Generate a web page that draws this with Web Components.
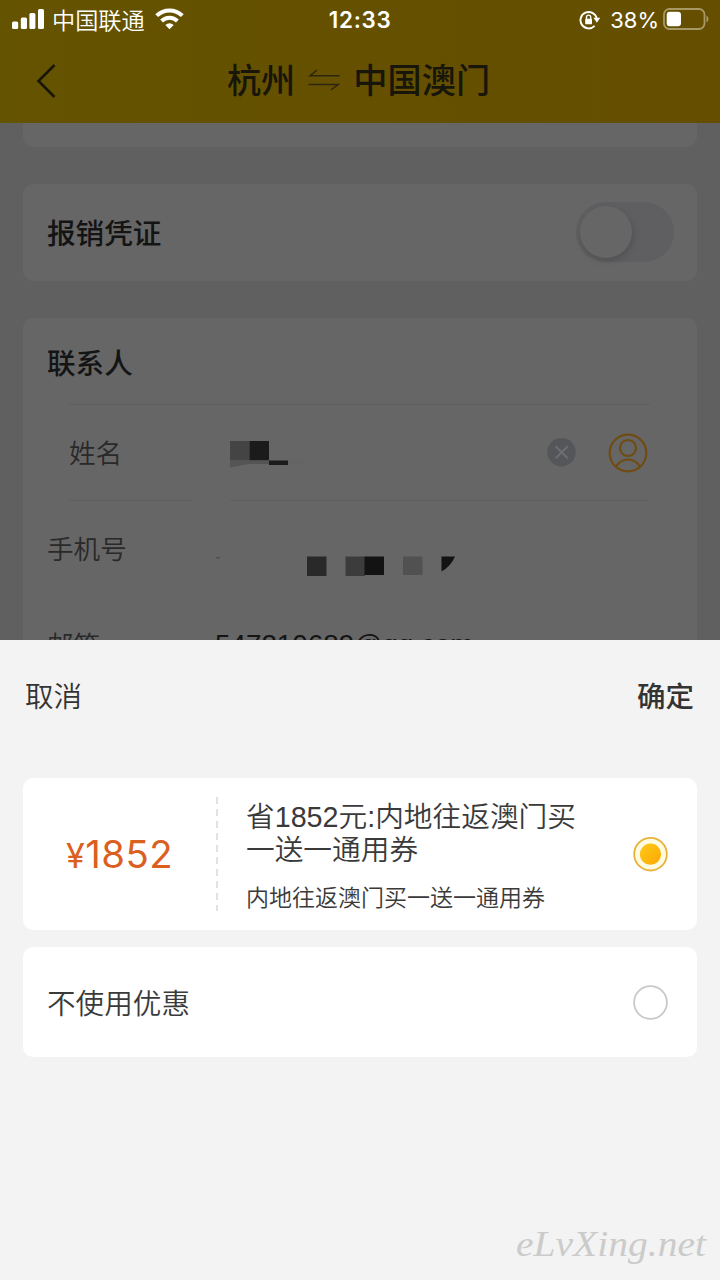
<!DOCTYPE html>
<html lang="zh-CN">
<head>
<meta charset="utf-8">
<title>优惠选择</title>
<style>
html,body{margin:0;height:100%;overflow:hidden}
body{width:720px;height:1280px;font-family:"Liberation Sans","Noto Sans CJK SC",sans-serif;background:#606060}
</style>
</head>
<body>
<booking-app></booking-app>
<script>
const define=(name,html)=>{
  const t=document.createElement('template');t.innerHTML=html;
  customElements.define(name,class extends HTMLElement{
    constructor(){super();this.attachShadow({mode:'open'}).append(t.content.cloneNode(true));}
  });
};

define('status-bar',`<style>
:host{display:flex;align-items:center;height:40px;color:#fff;box-sizing:border-box;padding:0 11px 0 12px}
svg{display:block;flex:none}
.bars,.wifi{margin-bottom:2px}
.carrier{font:350 23.2px/38px "Noto Sans CJK SC",sans-serif;margin:0 10px 0 8px;white-space:nowrap;height:40px}
.time{font:600 22.4px/40px Inter,sans-serif;letter-spacing:.75px;margin-left:145px;white-space:nowrap}
.right{margin-left:auto;display:flex;align-items:center}
.pct{font:400 22px/40px Inter,sans-serif;margin:0 4px 0 9px}
</style>
<svg class="bars" width="32" height="22" viewBox="0 0 32 22" fill="#fff"><rect y="13.500" width="6.200" height="7.500" rx="1.500"/><rect x="8.800" y="9.500" width="6.200" height="11.500" rx="1.500"/><rect x="17.400" y="5" width="6" height="16" rx="1.500"/><rect x="26" y="1" width="6" height="20" rx="1.500"/></svg>
<span class="carrier">中国联通</span>
<svg class="wifi" width="29" height="22" viewBox="0 0 29 22" fill="none" stroke="#fff" stroke-width="4"><path d="M1.700 7.700a18.200 18.200 0 0 1 25.600 0"/><path d="M6.600 13a11.300 11.300 0 0 1 15.800 0"/><path d="M14.500 21.200l-4.200-4.300q4.200-3.200 8.400 0z" fill="#fff" stroke="none"/></svg>
<span class="time">12:33</span>
<div class="right">
<svg width="22" height="20" viewBox="0 0 22 20" fill="none" stroke="#fff" stroke-width="1.900"><path d="M17.700 8.500A8.200 8.200 0 1 0 15.600 15.900"/><path d="M14.400 7.800h6.800l-3.300 5z" fill="#fff" stroke="none"/><rect x="6.200" y="8.800" width="6.800" height="5.500" rx=".6" fill="#fff" stroke="none"/><path d="M7.500 9V7.200a2.100 2.100 0 0 1 4.200 0V9" stroke-width="1.400"/></svg>
<span class="pct">38%</span>
<svg width="46" height="22" viewBox="0 0 46 22" style="margin-bottom:2px"><rect x="1" y="1" width="40.500" height="20" rx="5.500" fill="none" stroke="#a79966" stroke-width="1.800"/><rect x="3.700" y="3.700" width="14.300" height="14.600" rx="3" fill="#fff"/><path d="M43.500 7.500q2 1 2 3.500t-2 3.500z" fill="#a79966"/></svg>
</div>`);

define('title-bar',`<style>
:host{display:flex;align-items:center;height:83px;color:#18150b;padding:0 35px}
.title{flex:1;display:flex;justify-content:center;align-items:center;font:500 34.200px/77px "Noto Sans CJK SC",sans-serif;height:83px;margin-right:25px;white-space:nowrap}
.title svg{margin:0 13px 4px}
.title span{height:83px}
svg{display:block}
.back{margin-bottom:2px}
</style>
<svg class="back" width="22" height="36" viewBox="0 0 22 36" fill="none" stroke="#18150b" stroke-width="2.500"><path d="M19.500 2L3.500 18L19.500 34"/></svg>
<div class="title"><span><slot name="from"></slot></span><svg width="32" height="22" viewBox="0 0 32 22" fill="none" stroke="#2e260c" stroke-width="1.500"><path d="M31.500 6.800H2L9 1M.5 15.500H30L23 21"/></svg><span><slot name="to"></slot></span></div>`);

define('form-card',`<style>
:host{display:block;margin:0 23px;background:#666;border-radius:10px;box-sizing:border-box}
</style><slot></slot>`);

define('toggle-switch',`<style>
:host{display:block;width:98px;height:60px;border-radius:30px;background:#5f5f61;box-sizing:border-box;padding:4px 4px;margin-bottom:1px}
i{display:block;width:52px;height:52px;border-radius:50%;background:#666;box-shadow:1px 3px 7px rgba(0,0,0,.15)}
</style><i></i>`);

define('voucher-row',`<style>
:host{display:flex;align-items:center;justify-content:space-between;height:96px;padding:0 23px 0 24px;color:#141414;font:500 28.600px/95px "Noto Sans CJK SC",sans-serif}
.text{height:97px}
</style><span class="text"><slot></slot></span><toggle-switch></toggle-switch>`);

define('contact-form',`<style>
:host{display:block;font:350 26.600px/94px "Noto Sans CJK SC",sans-serif;color:#292929}
h2{margin:0;padding-left:24px;height:86px;font:500 28.600px/87px "Noto Sans CJK SC",sans-serif;color:#141414}
.row{display:flex;height:95px;line-height:94px;padding-left:24px;align-items:center}
.label{height:95px}
.name{margin:0 47px 0 46px;padding-left:0;border-top:1px solid #5f5f5f}
.rule{display:flex;gap:37px;height:1px;margin:0 49px 0 46px}
.rule i{height:1px;background:#5f5f5f;width:124px}.rule i+i{flex:1;width:auto}
.label{width:161px;flex:none}
.row.phone .label,.row.mail .label{width:168px}
.spacer{flex:1}.person{margin-left:32px;margin-right:2px}
svg{display:block}
.mail .label{line-height:96px}
.mail .value{font:400 27.800px/95px "Liberation Sans",sans-serif;color:#141414;white-space:nowrap;padding-top:1px}
</style>
<h2>联系人</h2>
<div class="row name"><span class="label">姓名</span>
<svg width="76" height="28" viewBox="0 0 76 28" style="margin-top:2px"><path fill="#444" d="M0 1h19.500v19.500H0z"/><path fill="#1b1b1b" d="M19.500 1H39v19.500H19.500zM39 20.500h19V25H39z"/><path fill="#555" d="M0 20.500h39V24H19L0 27.500z"/><path fill="#666" d="M20 24.500h19v2H20z"/><path fill="#646464" d="M58 20.500h18V24H58z"/></svg>
<span class="spacer"></span>
<svg width="29" height="29" viewBox="0 0 29 29"><circle cx="14.500" cy="14.300" r="14.200" fill="#55565a"/><path d="M8.700 8.300l12 12M20.700 8.300l-12 12" stroke="#6d6d6f" stroke-width="2"/></svg>
<svg class="person" width="40" height="40" viewBox="0 0 40 40" fill="none" stroke="#704c12" stroke-width="2.200"><circle cx="20" cy="20" r="18.300"/><circle cx="20" cy="15" r="8"/><path d="M8 33.600Q12.500 26.500 20 26.500T32 33.600"/></svg>
</div>
<div class="rule"><i></i><i></i></div>
<div class="row phone"><span class="label">手机号</span>
<svg width="242" height="40" viewBox="0 0 242 40" style="margin-top:24px"><path fill="#505050" d="M1 16h4v1.500H1z"/><path fill="#292929" d="M92 15.500h19.500V35H92z"/><path fill="#3c3c3c" d="M130.500 15.500H150V35h-19.500z"/><path fill="#131313" d="M149.500 15.500H169V34h-19.500z"/><path fill="#515151" d="M188 15.500h19.500V34H188z"/><path fill="#131313" d="M226.500 15.500h13.500q-4 9.500-13.500 15z"/></svg></div>
<div class="row mail"><span class="label">邮箱</span><span class="value">547210689@qq.com</span></div>`);

define('coupon-radio',`<style>
:host{display:block;width:35px;height:35px;flex:none}
.on{display:none}:host([checked]) .on{display:block}:host([checked]) .off{display:none}svg{display:block}
</style>
<svg class="off" width="35" height="35" viewBox="0 0 35 35"><circle cx="17.500" cy="17.500" r="16.400" fill="#fff" stroke="#c9c9c9" stroke-width="1.800"/></svg>
<svg class="on" width="35" height="35" viewBox="0 0 35 35"><defs><linearGradient id="g" x1="0" y1="0" x2="1" y2="1"><stop offset="0" stop-color="#ffc91c"/><stop offset="1" stop-color="#fba800"/></linearGradient></defs><circle cx="17.500" cy="17.200" r="16.300" fill="#fffbe0" stroke="#e9b23c" stroke-width="1.800"/><circle cx="17.500" cy="17.200" r="10.600" fill="url(#g)"/></svg>`);

define('coupon-option',`<style>
:host{display:flex;align-items:center;margin:0 23px;background:#fff;border-radius:10px;box-sizing:border-box;padding-right:29px;height:152px;color:#3a3a3a}
.price{width:193px;text-align:center;color:#dc5f22;font:400 38.300px/64px Inter,sans-serif;letter-spacing:.5px;white-space:nowrap;padding-top:2px}
.dash{width:2px;height:114px;flex:none;background:repeating-linear-gradient(#e2e2e2 0 7px,transparent 7px 12px)}
.info{flex:1;padding:4px 0 0 28px}
.title{font:350 28.700px/33px "Liberation Sans","Noto Sans CJK SC",sans-serif;white-space:nowrap}
.sub{font:350 23px/32px "Noto Sans CJK SC",sans-serif;margin-top:13px;white-space:nowrap}
</style>
<div class="price"><slot name="price"></slot></div><div class="dash"></div>
<div class="info"><div class="title"><slot name="title"></slot></div><div class="sub"><slot name="sub"></slot></div></div>
<coupon-radio checked></coupon-radio>`);

define('plain-option',`<style>
:host{display:flex;align-items:center;justify-content:space-between;margin:17px 23px 0;background:#fff;border-radius:10px;padding:0 29px 0 24px;height:110px;color:#3a3a3a;font:350 28.600px/110px "Noto Sans CJK SC",sans-serif}
</style><slot></slot><coupon-radio></coupon-radio>`);

define('coupon-sheet',`<style>
:host{display:flex;flex-direction:column;height:640px;background:#f3f3f3;color:#333;flex:none}
header{display:flex;justify-content:space-between;height:138px;padding:0 26px 0 25px;font:350 28.500px/110px "Noto Sans CJK SC",sans-serif;box-sizing:border-box;flex:none}
b{font-weight:500}
footer{margin-top:auto;display:flex;justify-content:flex-end;padding-right:8px;height:66px}
</style>
<header><span>取消</span><b>确定</b></header>
<coupon-option><span slot="price"><span style="font-size:34px">¥</span>1852</span><span slot="title">省1852元:内地往返澳门买<br>一送一通用券</span><span slot="sub">内地往返澳门买一送一通用券</span></coupon-option>
<plain-option>不使用优惠</plain-option>
<footer><svg width="200" height="66" viewBox="0 0 200 66"><text x="4" y="42" textLength="190" lengthAdjust="spacingAndGlyphs" font-family="'Brush Script MT','Liberation Serif',serif" font-style="italic" font-size="36" fill="#cbcbcb">eLvXing.net</text></svg></footer>`);

define('booking-app',`<style>
:host{display:flex;flex-direction:column;width:720px;height:1280px;overflow:hidden;background:#606060}
.top{background:linear-gradient(90deg,#645300,#654e00);height:123px;flex:none}
main{height:517px;overflow:hidden;flex:none}
.stub{height:24px;border-radius:0 0 10px 10px;margin-bottom:37px}
.contact{margin-top:37px;height:400px}
.voucher{height:97px}
</style>
<div class="top"><status-bar></status-bar><title-bar><span slot="from">杭州</span><span slot="to">中国澳门</span></title-bar></div>
<main><form-card class="stub"></form-card><form-card class="voucher"><voucher-row>报销凭证</voucher-row></form-card><form-card class="contact"><contact-form></contact-form></form-card></main>
<coupon-sheet></coupon-sheet>`);
</script>
</body>
</html>
